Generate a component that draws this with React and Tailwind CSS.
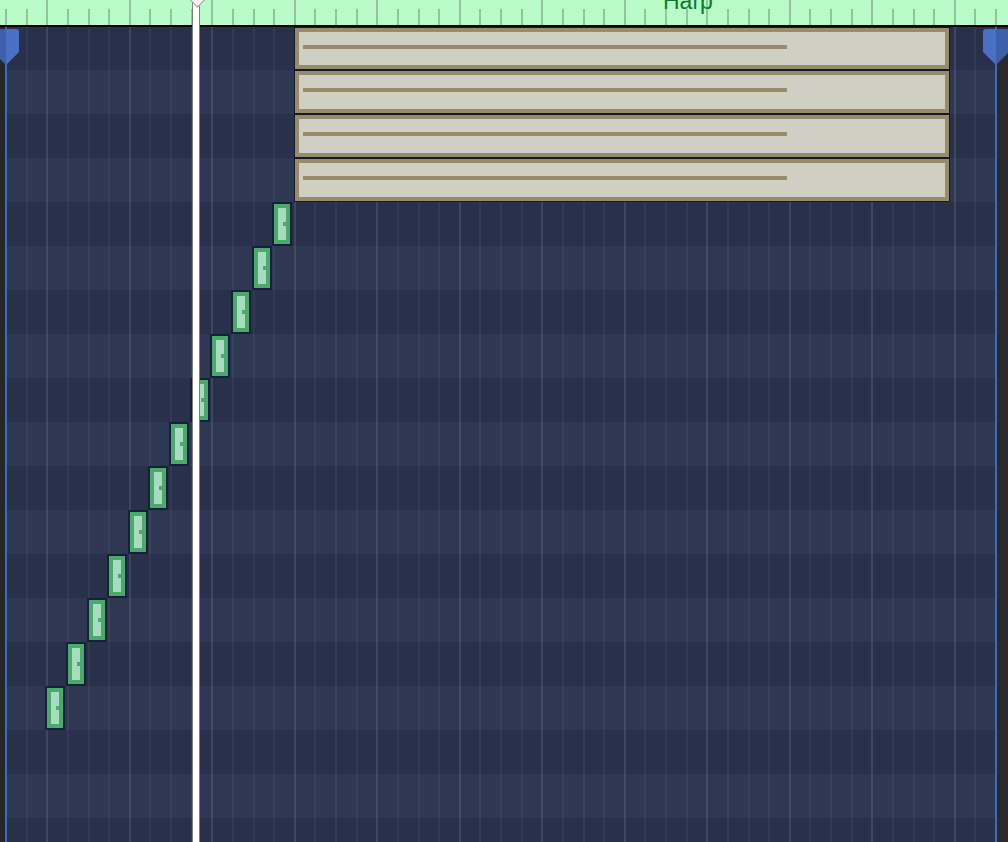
import React from "react";

const STEP = 20.625;
const COLS = 48;
const ROWS = 19;

// green notes run down-left: column k, row r
const stepNotes = Array.from({ length: 12 }, (_, i) => ({ k: 2 + i, r: 15 - i }));
const longNotes = [0, 1, 2, 3];

const rowTop = (r) => (r === 0 ? 0 : 44 * r - 1);
const rowHeight = (r) => (r === 0 ? 43 : 44);

function Marker({ side }) {
  const light = "#4a70c4";
  const dark = "#3e5fac";
  const id = `mk-${side}`;
  return (
    <svg width="26" height="36" viewBox="0 0 26 36" className="block">
      <defs>
        <linearGradient id={id} x1="0" x2="1" y1="0" y2="0">
          <stop offset="0" stopColor={side === "left" ? dark : light} />
          <stop offset="0.5" stopColor={side === "left" ? dark : light} />
          <stop offset="0.5" stopColor={side === "left" ? light : dark} />
          <stop offset="1" stopColor={side === "left" ? light : dark} />
        </linearGradient>
      </defs>
      <path d="M0 3 Q0 0 3 0 H23 Q26 0 26 3 V23 L13 36 L0 23 Z" fill={`url(#${id})`} />
    </svg>
  );
}

function Ruler() {
  return (
    <div className="relative h-[27px] bg-[#b9fcc9] border-b-2 border-black flex overflow-hidden">
      <div className="w-[5px] shrink-0" />
      {Array.from({ length: COLS + 1 }, (_, k) => (
        <div key={k} className="w-[20.625px] shrink-0 h-full flex flex-col justify-end">
          <div className={`w-[2px] bg-[#92c49e] ${k % 4 === 2 ? "h-full" : "h-[16px]"}`} />
        </div>
      ))}
      {/* track label, clipped by the top of the view */}
      <span
        className="absolute left-[663px] top-[-10px] text-[23px] leading-none text-[#0b7a2b]"
        style={{ fontFamily: '"Liberation Sans", Arial, sans-serif' }}
      >
        Harp
      </span>
    </div>
  );
}

function StepNote({ k, r }) {
  return (
    <div
      className="absolute w-[20px] border-2 border-[#15203a] bg-[#15203a]"
      style={{ left: Math.round(STEP * k) - 1, top: rowTop(r), height: rowHeight(r) }}
    >
      <div className="w-full h-full border-[4px] border-[#4ca96c] bg-[#a7dcc1] flex items-center justify-end">
        <div className="w-[3px] h-[4px] bg-[#4ca96c]" />
      </div>
    </div>
  );
}

function LongNote({ r }) {
  return (
    <div
      className="absolute left-[289px] w-[656px] border border-[#141a2c]"
      style={{ top: rowTop(r), height: rowHeight(r) }}
    >
      <div className="w-full h-full border-[4px] border-[#978d6b] bg-[#cfcfc3] pl-[4px] pt-[13px]">
        <div className="w-[484px] h-[4px] bg-[#978d6b]" />
      </div>
    </div>
  );
}

export default function App() {
  return (
    <div className="relative w-[1008px] h-[842px] overflow-hidden bg-[#28304a]">
      <Ruler />

      <div className="flex h-[815px]">
        {/* left gutter */}
        <div className="w-[5px] shrink-0 bg-[#262729]" />

        {/* note canvas */}
        <div className="relative w-[992px] shrink-0">
          <div className="flex flex-col">
            {Array.from({ length: ROWS }, (_, r) => (
              <div
                key={r}
                className={`${r === 0 ? "h-[43px]" : "h-[44px]"} shrink-0 ${r % 2 ? "bg-[#2f3852]" : "bg-[#28304a]"}`}
              />
            ))}
          </div>

          {/* vertical grid */}
          <div className="absolute inset-0 flex pointer-events-none">
            {Array.from({ length: COLS + 1 }, (_, k) => (
              <div
                key={k}
                className={`w-[20.625px] shrink-0 h-full border-l-2 ${
                  k === 0 || k === COLS
                    ? "border-[#3a6cc0]"
                    : k % 4 === 2
                    ? "border-white/[0.1]"
                    : "border-white/[0.05]"
                }`}
              />
            ))}
          </div>

          {longNotes.map((r) => (
            <LongNote key={r} r={r} />
          ))}
          {stepNotes.map((n) => (
            <StepNote key={n.k} {...n} />
          ))}
        </div>

        {/* right gutter */}
        <div className="flex-1 bg-[#2a2a2b]" />
      </div>

      {/* loop markers */}
      <div className="absolute left-[-7px] top-[29px]">
        <Marker side="left" />
      </div>
      <div className="absolute left-[983px] top-[29px]">
        <Marker side="right" />
      </div>

      {/* playhead */}
      <div className="absolute left-[192px] top-0 bottom-0 w-[8px] border-x border-black/50 bg-white" />
      <div className="absolute left-[191px] top-[-8px] w-[13px] h-[13px] rotate-45 bg-white border border-[#9a9a9a]" />
    </div>
  );
}
